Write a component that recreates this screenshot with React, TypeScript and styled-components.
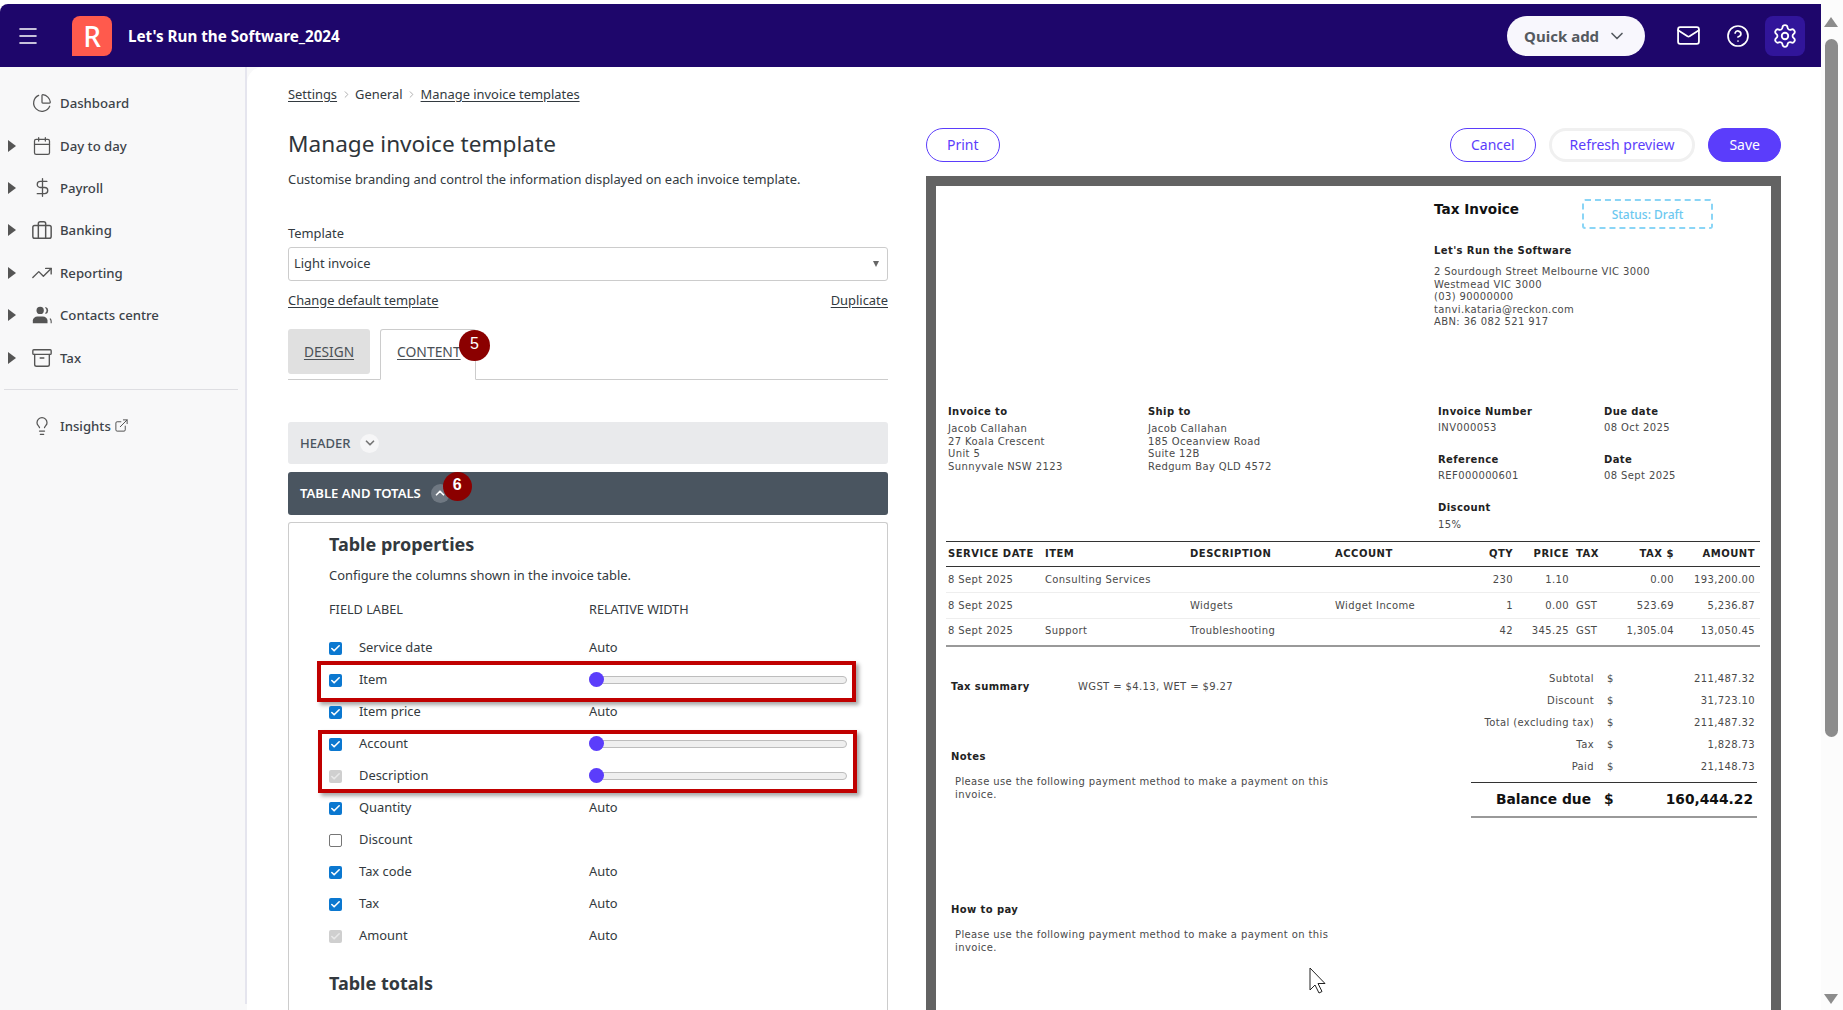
import React from "react";
import styled, { createGlobalStyle } from "styled-components";
import {
  Archive,
  Calendar,
  ChartPie,
  Check,
  ChevronDown,
  ChevronRight,
  ChevronUp,
  CircleHelp,
  DollarSign,
  ExternalLink,
  Lightbulb,
  Mail,
  Menu,
  Settings,
  TrendingUp,
} from "lucide-react";

const UI_FONT = `"Noto Sans", "Open Sans", sans-serif`;
const DOC_FONT = `"DejaVu Sans", sans-serif`;

const GlobalStyle = createGlobalStyle`
  html, body {
    margin: 0;
    height: 100%;
    overflow: hidden;
    background: #fff;
  }
  body {
    font-family: ${UI_FONT};
    color: #333a40;
  }
  * { box-sizing: border-box; }
`;

const BriefcaseIcon = () => (
  <svg width="22" height="22" viewBox="0 0 24 24" fill="none" stroke="currentColor" strokeWidth="1.6">
    <rect x="2" y="7" width="20" height="14" rx="2" />
    <path d="M8 21V5a2 2 0 0 1 2-2h4a2 2 0 0 1 2 2v16" />
  </svg>
);

const UsersIcon = () => (
  <svg width="22" height="22" viewBox="0 0 24 24" fill="currentColor">
    <circle cx="10" cy="7" r="4" />
    <path d="M2 21v-3c0-2.6 2.4-4.5 5-4.5h6c2.6 0 5 1.900 5 4.500v3z" />
    <path d="M16 3.200a4 4 0 0 1 0 7.600l-.6-.9a3.500 3.500 0 0 0 0-5.800z" />
    <path d="M21 15.500c1 .8 1.600 2 1.600 3.500v2h-1.200v-2c0-1-.4-2-1.200-2.600z" />
  </svg>
);

const navItems = [
  { label: "Dashboard", icon: <ChartPie size={20} strokeWidth={1.5} />, caret: false },
  { label: "Day to day", icon: <Calendar size={20} strokeWidth={1.5} />, caret: true },
  { label: "Payroll", icon: <DollarSign size={21} strokeWidth={1.5} />, caret: true },
  { label: "Banking", icon: <BriefcaseIcon />, caret: true },
  { label: "Reporting", icon: <TrendingUp size={22} strokeWidth={1.5} />, caret: true },
  { label: "Contacts centre", icon: <UsersIcon />, caret: true },
  { label: "Tax", icon: <Archive size={22} strokeWidth={1.5} />, caret: true },
];

const tableFields = [
  { label: "Service date", state: "on", width: "Auto" },
  { label: "Item", state: "on", width: "slider", group: 1 },
  { label: "Item price", state: "on", width: "Auto" },
  { label: "Account", state: "on", width: "slider", group: 2 },
  { label: "Description", state: "locked", width: "slider", group: 2 },
  { label: "Quantity", state: "on", width: "Auto" },
  { label: "Discount", state: "off", width: "" },
  { label: "Tax code", state: "on", width: "Auto" },
  { label: "Tax", state: "on", width: "Auto" },
  { label: "Amount", state: "locked", width: "Auto" },
];

const invoiceLines = [
  ["8 Sept 2025", "Consulting Services", "", "", "230", "1.10", "", "0.00", "193,200.00"],
  ["8 Sept 2025", "", "Widgets", "Widget Income", "1", "0.00", "GST", "523.69", "5,236.87"],
  ["8 Sept 2025", "Support", "Troubleshooting", "", "42", "345.25", "GST", "1,305.04", "13,050.45"],
];

const invoiceHead = ["SERVICE DATE", "ITEM", "DESCRIPTION", "ACCOUNT", "QTY", "PRICE", "TAX", "TAX $", "AMOUNT"];

const totals = [
  ["Subtotal", "211,487.32"],
  ["Discount", "31,723.10"],
  ["Total (excluding tax)", "211,487.32"],
  ["Tax", "1,828.73"],
  ["Paid", "21,148.73"],
];

const Shell = styled.div`
  display: flex;
  width: 1843px;
  height: 1010px;
  overflow: hidden;
`;

const Page = styled.div`
  width: 1821px;
  display: flex;
  flex-direction: column;
  padding-top: 4px;
  position: relative;
`;

const TopBar = styled.header`
  height: 63px;
  flex: none;
  background: #1e066b;
  border-radius: 8px 0 0 0;
  display: flex;
  align-items: center;
  padding: 0 16px 0 16px;
  color: #fff;
`;

const MenuButton = styled.div`
  width: 24px;
  height: 24px;
  display: flex;
  align-items: center;
  justify-content: center;
  margin-right: 32px;
`;

const Logo = styled.div`
  width: 40px;
  height: 40px;
  background: #ff5a4d;
  border-radius: 8px 8px 8px 0;
  display: flex;
  align-items: center;
  justify-content: center;
  font-size: 28px;
  font-weight: 500;
  margin-right: 16px;
`;

const OrgName = styled.div`
  font-size: 15.2px;
  font-weight: 700;
  flex: 1;
`;

const QuickAdd = styled.div`
  width: 138px;
  height: 40px;
  border-radius: 20px;
  background: #f8f7fd;
  color: #555a60;
  font-size: 15px;
  font-weight: 700;
  display: flex;
  align-items: center;
  justify-content: center;
  gap: 8px;
  margin-right: 28px;
`;

const TopIcon = styled.div<{ $active?: boolean; $gap?: number }>`
  width: 40px;
  height: 40px;
  border-radius: 8px;
  background: ${(p) => (p.$active ? "#31159a" : "transparent")};
  display: flex;
  align-items: center;
  justify-content: center;
  margin-right: ${(p) => p.$gap ?? 0}px;
`;

const TopIcons = styled.div`
  display: flex;
  gap: 7px;
  margin-left: -4px;
`;

const Body = styled.div`
  flex: 1;
  display: flex;
  min-height: 0;
  background: #f8f8f9;
`;

const Sidebar = styled.nav`
  width: 247px;
  flex: none;
  border-right: 2px solid #e5e5ee;
  padding-top: 15px;
  margin-bottom: 6px;
`;

const NavItem = styled.div`
  height: 42.4px;
  display: flex;
  align-items: center;
  padding-left: 8px;
  font-size: 13.2px;
  font-weight: 500;
  color: #3d4349;
`;

const Caret = styled.span<{ $show: boolean }>`
  width: 0;
  height: 0;
  border-style: solid;
  border-width: 6px 0 6px 8px;
  border-color: transparent transparent transparent ${(p) => (p.$show ? "#555" : "transparent")};
  margin-right: 14px;
`;

const NavIcon = styled.span`
  width: 24px;
  height: 24px;
  display: flex;
  align-items: center;
  justify-content: center;
  margin-right: 6px;
  color: #555;
`;

const NavDivider = styled.hr`
  border: 0;
  border-top: 1px solid #dedee2;
  margin: 10px 7px 15px 4px;
`;

const Main = styled.main`
  flex: 1;
  background: #fff;
  border-radius: 16px 0 0 0;
  display: grid;
  grid-template-columns: 600px 855px;
  column-gap: 38px;
  padding-left: 41px;
  overflow: hidden;
`;

const Left = styled.section`
  display: flex;
  flex-direction: column;
  padding-top: 17px;
  font-size: 12.9px;
`;

const Crumbs = styled.div`
  display: flex;
  align-items: center;
  gap: 3.500px;
  line-height: 20px;
  color: #777;
`;

const Crumb = styled.span<{ $link?: boolean }>`
  color: #333a40;
  text-decoration: ${(p) => (p.$link ? "underline" : "none")};
  text-underline-offset: 2px;
`;

const Title = styled.h1`
  margin: 23px 0 0;
  font-size: 22.6px;
  font-weight: 400;
  line-height: 34px;
  color: #2f353a;
`;

const Lead = styled.p`
  margin: 8px 0 0;
  line-height: 20px;
`;

const FieldLabel = styled.label`
  margin-top: 34px;
  line-height: 20px;
`;

const SelectBox = styled.div`
  margin-top: 4px;
  height: 34px;
  border: 1px solid #ccc;
  border-radius: 3px;
  padding: 0 8px 2px 5px;
  display: flex;
  align-items: center;
  justify-content: space-between;
`;

const SelectArrow = styled.span`
  width: 0;
  height: 0;
  border-style: solid;
  border-width: 6px 3.5px 0 3.5px;
  border-color: #666 transparent transparent transparent;
  margin-top: 2px;
`;

const LinkRow = styled.div`
  margin-top: 9px;
  line-height: 20px;
  display: flex;
  justify-content: space-between;
  text-decoration: underline;
  text-underline-offset: 2px;
`;

const Tabs = styled.div`
  margin-top: 19px;
  height: 51px;
  border-bottom: 1px solid #ccc;
  display: flex;
  align-items: flex-start;
  gap: 10px;
`;

const Tab = styled.div`
  height: 45px;
  width: 82px;
  background: #e0e0e0;
  border-radius: 3px;
  display: flex;
  align-items: center;
  justify-content: center;
  text-decoration: underline;
  text-underline-offset: 2px;
  font-size: 13.7px;
  color: #4a5055;
`;

const ActiveTab = styled.div`
  position: relative;
  height: 51px;
  width: 96px;
  background: #fff;
  border: 1px solid #ccc;
  border-bottom: 1px solid #fff;
  border-radius: 3px 3px 0 0;
  padding: 12px 0 0 16px;
  text-decoration: underline;
  text-underline-offset: 2px;
  font-size: 13.9px;
  color: #4a5055;
`;

const StepBadge = styled.span<{ $top: number; $left: number; $size: number }>`
  position: absolute;
  top: ${(p) => p.$top}px;
  left: ${(p) => p.$left}px;
  width: ${(p) => p.$size}px;
  height: ${(p) => p.$size}px;
  border-radius: 50%;
  background: #8b0000;
  color: #fff;
  font-family: "Liberation Sans", sans-serif;
  font-size: 16px;
  display: flex;
  align-items: center;
  justify-content: center;
  padding-bottom: 3px;
  z-index: 3;
`;

const Accordion = styled.div<{ $open?: boolean }>`
  height: ${(p) => (p.$open ? "43px" : "42px")};
  margin-top: ${(p) => (p.$open ? "8px" : "42px")};
  background: ${(p) => (p.$open ? "#4a5560" : "#e9eaec")};
  color: ${(p) => (p.$open ? "#fff" : "#4a5560")};
  border-radius: 3px;
  padding: ${(p) => (p.$open ? "0 0 1px 12px" : "0 0 0 12px")};
  display: flex;
  align-items: center;
  gap: 10px;
  font-size: ${(p) => (p.$open ? "13.1px" : "13px")};
  font-weight: ${(p) => (p.$open ? 600 : 500)};
`;

const AccordionChevron = styled.span<{ $open?: boolean }>`
  position: relative;
  width: 19px;
  height: 19px;
  border-radius: 50%;
  background: ${(p) => (p.$open ? "#6f7882" : "#f6f6f7")};
  color: ${(p) => (p.$open ? "#fff" : "#777")};
  display: flex;
  align-items: center;
  justify-content: center;
`;

const Panel = styled.div`
  margin-top: 7px;
  flex: 1;
  border: 1px solid #ccc;
  border-bottom: 0;
  border-radius: 3px 3px 0 0;
  padding: 9px 0 0 40px;
`;

const PanelTitle = styled.h2`
  margin: 0;
  font-size: 18px;
  font-weight: 700;
  line-height: 24px;
  color: #33393e;
`;

const PanelText = styled.p`
  margin: 9px 0 0;
  line-height: 20px;
`;

const FieldHead = styled.div`
  margin: 14px 0 13px;
  line-height: 20px;
  display: grid;
  grid-template-columns: 260px 258px;
  font-size: 12.7px;
`;

const FieldGroup = styled.div`
  position: relative;
  width: 518px;
`;

const Highlight = styled.div<{ $top: number; $bottom: number; $left: number; $right: number }>`
  position: absolute;
  top: ${(p) => p.$top}px;
  bottom: ${(p) => p.$bottom}px;
  left: ${(p) => p.$left}px;
  right: ${(p) => p.$right}px;
  border: 4px solid #c00000;
  box-shadow: 3px 3px 4px rgba(0, 0, 0, 0.35);
  pointer-events: none;
`;

const FieldRow = styled.div`
  height: 32px;
  display: grid;
  grid-template-columns: 30px 230px 258px;
  align-items: center;
`;

const FieldText = styled.span`
  margin-top: -2px;
`;

const Tick = styled.span<{ $state: string }>`
  width: 13px;
  height: 13px;
  border-radius: 2px;
  display: flex;
  align-items: center;
  justify-content: center;
  background: ${(p) => (p.$state === "on" ? "#0b78d0" : p.$state === "locked" ? "#cfcfcf" : "#fff")};
  border: ${(p) => (p.$state === "off" ? "1px solid #767676" : "0")};
  color: ${(p) => (p.$state === "on" ? "#fff" : "#e8e8e8")};
`;

const SliderTrack = styled.div`
  height: 8px;
  border: 1px solid #bdbdbd;
  border-radius: 4px;
  background: #efefef;
  position: relative;
`;

const SliderThumb = styled.span`
  position: absolute;
  left: -1px;
  top: -5px;
  width: 15px;
  height: 15px;
  border-radius: 50%;
  background: #5b3dfb;
`;

const SubTitle = styled(PanelTitle)`
  margin-top: 18px;
  line-height: 26px;
`;

const Right = styled.section`
  padding-top: 61px;
  display: flex;
  flex-direction: column;
  min-height: 0;
`;

const Actions = styled.div`
  display: flex;
  gap: 13px;
  margin-bottom: 14px;
`;

const Spacer = styled.div`
  flex: 1;
`;

const PillButton = styled.button<{ $kind?: "outline" | "soft" | "solid" }>`
  height: 34px;
  border-radius: 17px;
  font-family: ${UI_FONT};
  font-size: 14px;
  padding: ${(p) => (p.$kind === "soft" ? "0 18px 1px" : "0 20px 1px")};
  color: ${(p) => (p.$kind === "solid" ? "#fff" : "#5b3dfb")};
  background: ${(p) => (p.$kind === "solid" ? "#5b3dfb" : "#fff")};
  border: ${(p) =>
    p.$kind === "soft" ? "3px solid #f0f0f0" : "1px solid #5b3dfb"};
`;

const PreviewFrame = styled.div`
  flex: 1;
  border: 10px solid #636363;
  border-bottom: 0;
  background: #fff;
  font-family: ${DOC_FONT};
  font-size: 10px;
  color: #4a4a4a;
  overflow: hidden;
`;

const DocTop = styled.div`
  height: 218px;
  padding: 13px 0 0 498px;
`;

const DocTitleRow = styled.div`
  display: flex;
  align-items: flex-start;
`;

const DocTitle = styled.div`
  width: 148px;
  font-size: 13.6px;
  font-weight: 700;
  line-height: 20px;
  color: #111;
`;

const StatusBox = styled.div`
  width: 131px;
  height: 30px;
  border: 2px dashed #8ad5f6;
  border-radius: 3px;
  color: #6cc8f0;
  font-family: ${UI_FONT};
  font-size: 12px;
  font-weight: 500;
  display: flex;
  align-items: center;
  justify-content: center;
`;

const DocStrong = styled.div<{ $spaced?: boolean }>`
  font-weight: 700;
  line-height: 14px;
  color: #222;
  letter-spacing: 0.4px;
  margin-top: ${(p) => (p.$spaced ? "15px" : "0")};
`;

const DocLines = styled.div<{ $top?: number; $inset?: number }>`
  margin-top: ${(p) => p.$top ?? 8}px;
  padding-left: ${(p) => p.$inset ?? 0}px;
  line-height: 12.5px;
  letter-spacing: 0.38px;
  white-space: pre-line;
`;

const DocMeta = styled.div`
  height: 137px;
  padding: 1px 0 0 12px;
  display: grid;
  grid-template-columns: 200px 290px 166px 1fr;
`;

const MetaField = styled.div`
  margin-bottom: 18.5px;
`;

const DocName = styled.div`
  margin-top: 1.5px;
  line-height: 15px;
  letter-spacing: 0.38px;
`;

const DocTable = styled.div`
  margin-left: 10px;
  width: 814px;
  border-top: 1px solid #333;
  border-bottom: 2px solid #999;
`;

const DocRow = styled.div<{ $head?: boolean; $last?: boolean }>`
  height: ${(p) => (p.$head ? "25px" : "26px")};
  padding: ${(p) => (p.$head ? "0 5px 2px 2px" : p.$last ? "0 5px 4px 2px" : "0 5px 0 2px")};
  display: grid;
  grid-template-columns: 97px 145px 145px 115px 63px 56px 51px 54px 81px;
  align-items: center;
  border-bottom: ${(p) => (p.$last ? "0" : p.$head ? "1px solid #333" : "1px solid #eee")};
  font-weight: ${(p) => (p.$head ? 700 : 400)};
  color: ${(p) => (p.$head ? "#222" : "#4a4a4a")};
  letter-spacing: ${(p) => (p.$head ? "0.5px" : "0.38px")};
`;

const DocCell = styled.span<{ $align: string; $pad?: boolean }>`
  text-align: ${(p) => p.$align};
  padding-left: ${(p) => (p.$pad ? "7px" : "0")};
  white-space: nowrap;
`;

const DocBottom = styled.div`
  display: grid;
  grid-template-columns: 535px 286px;
`;

const DocNotes = styled.div`
  padding: 33px 0 0 15px;
`;

const TaxSummary = styled.div`
  display: grid;
  grid-template-columns: 127px 1fr;
  line-height: 14px;
  letter-spacing: 0.38px;
`;

const NoteHead = styled(DocStrong)<{ $gap: number }>`
  margin-top: ${(p) => p.$gap}px;
`;

const NoteText = styled.div`
  margin-top: 10.5px;
  padding-left: 4px;
  width: 395px;
  line-height: 13px;
  letter-spacing: 0.38px;
`;

const DocTotals = styled.div`
  padding-top: 20px;
`;

const TotalRow = styled.div`
  height: 22px;
  display: grid;
  grid-template-columns: 123px 13px 148px;
  align-items: center;
  letter-spacing: 0.38px;
`;

const TotalLabel = styled.span`
  text-align: right;
  white-space: nowrap;
`;

const TotalSign = styled.span`
  grid-column: 2 / 3;
  padding-left: 13px;
  white-space: nowrap;
`;

const TotalValue = styled.span`
  text-align: right;
`;

const BalanceRow = styled.div`
  margin-top: 5px;
  height: 36px;
  padding-bottom: 2px;
  border-top: 1px solid #333;
  border-bottom: 2px solid #999;
  display: grid;
  grid-template-columns: 120px 14px 148px;
  align-items: center;
  font-size: 13.8px;
  font-weight: 700;
  color: #111;
`;

const Scrollbar = styled.aside`
  width: 22px;
  background: #fcfcfc;
  display: flex;
  flex-direction: column;
  align-items: center;
  padding: 17px 2px 6px 0;
`;

const ScrollArrow = styled.span<{ $down?: boolean }>`
  width: 0;
  height: 0;
  border-style: solid;
  border-width: ${(p) => (p.$down ? "10px 7px 0 7px" : "0 7px 10px 7px")};
  border-color: ${(p) =>
    p.$down ? "#8c8c8c transparent transparent transparent" : "transparent transparent #8c8c8c transparent"};
`;

const ScrollThumb = styled.div`
  width: 13px;
  height: 698px;
  margin-top: 12px;
  border-radius: 7px;
  background: #8c8c8c;
`;

const Pointer = styled.svg`
  position: absolute;
  left: 1309px;
  top: 967px;
`;

const Grow = styled.div`
  flex: 1;
`;

export default function App() {
  return (
    <>
      <GlobalStyle />
      <Shell>
        <Page>
          <TopBar>
            <MenuButton>
              <Menu size={26} strokeWidth={1.6} />
            </MenuButton>
            <Logo>R</Logo>
            <OrgName>Let's Run the Software_2024</OrgName>
            <QuickAdd>
              Quick add <ChevronDown size={20} strokeWidth={2} />
            </QuickAdd>
            <TopIcons>
              <TopIcon $gap={2.4}>
                <Mail size={25} strokeWidth={1.7} />
              </TopIcon>
              <TopIcon>
                <CircleHelp size={24} strokeWidth={1.7} />
              </TopIcon>
              <TopIcon $active>
                <Settings size={26} strokeWidth={1.7} />
              </TopIcon>
            </TopIcons>
          </TopBar>
          <Body>
            <Sidebar>
              {navItems.map((item) => (
                <NavItem key={item.label}>
                  <Caret $show={item.caret} />
                  <NavIcon>{item.icon}</NavIcon>
                  {item.label}
                </NavItem>
              ))}
              <NavDivider />
              <NavItem>
                <Caret $show={false} />
                <NavIcon>
                  <Lightbulb size={20} strokeWidth={1.5} />
                </NavIcon>
                Insights&nbsp;
                <ExternalLink size={15} strokeWidth={1.6} color="#555" />
              </NavItem>
            </Sidebar>
            <Main>
              <Left>
                <Crumbs>
                  <Crumb $link>Settings</Crumb>
                  <ChevronRight size={11} color="#aaa" />
                  <Crumb>General</Crumb>
                  <ChevronRight size={11} color="#aaa" />
                  <Crumb $link>Manage invoice templates</Crumb>
                </Crumbs>
                <Title>Manage invoice template</Title>
                <Lead>Customise branding and control the information displayed on each invoice template.</Lead>
                <FieldLabel>Template</FieldLabel>
                <SelectBox>
                  Light invoice
                  <SelectArrow />
                </SelectBox>
                <LinkRow>
                  <span>Change default template</span>
                  <span>Duplicate</span>
                </LinkRow>
                <Tabs>
                  <Tab>DESIGN</Tab>
                  <ActiveTab>
                    CONTENT
                    <StepBadge $top={0} $left={78} $size={31}>5</StepBadge>
                  </ActiveTab>
                </Tabs>
                <Accordion>
                  HEADER
                  <AccordionChevron>
                    <ChevronDown size={14} strokeWidth={3} />
                  </AccordionChevron>
                </Accordion>
                <Accordion $open>
                  TABLE AND TOTALS
                  <AccordionChevron $open>
                    <ChevronUp size={14} strokeWidth={3} />
                    <StepBadge $top={-12} $left={12} $size={29}>6</StepBadge>
                  </AccordionChevron>
                </Accordion>
                <Panel>
                  <PanelTitle>Table properties</PanelTitle>
                  <PanelText>Configure the columns shown in the invoice table.</PanelText>
                  <FieldHead>
                    <span>FIELD LABEL</span>
                    <span>RELATIVE WIDTH</span>
                  </FieldHead>
                  {[
                    tableFields.slice(0, 1),
                    tableFields.slice(1, 2),
                    tableFields.slice(2, 3),
                    tableFields.slice(3, 5),
                    tableFields.slice(5),
                  ].map((rows, i) => (
                    <FieldGroup key={i}>
                      {rows.map((f) => (
                        <FieldRow key={f.label}>
                          <Tick $state={f.state}>
                            {f.state !== "off" && <Check size={11} strokeWidth={3.5} />}
                          </Tick>
                          <FieldText>{f.label}</FieldText>
                          {f.width === "slider" ? (
                            <SliderTrack>
                              <SliderThumb />
                            </SliderTrack>
                          ) : (
                            <FieldText>{f.width}</FieldText>
                          )}
                        </FieldRow>
                      ))}
                      {i === 1 && <Highlight $top={-3} $bottom={-6} $left={-12} $right={-9} />}
                      {i === 3 && <Highlight $top={2} $bottom={-1} $left={-11} $right={-10} />}
                    </FieldGroup>
                  ))}
                  <SubTitle>Table totals</SubTitle>
                </Panel>
              </Left>
              <Right>
                <Actions>
                  <PillButton>Print</PillButton>
                  <Spacer />
                  <PillButton>Cancel</PillButton>
                  <PillButton $kind="soft">Refresh preview</PillButton>
                  <PillButton $kind="solid">Save</PillButton>
                </Actions>
                <PreviewFrame>
                  <DocTop>
                    <DocTitleRow>
                      <DocTitle>Tax Invoice</DocTitle>
                      <StatusBox>Status: Draft</StatusBox>
                    </DocTitleRow>
                    <DocStrong $spaced>Let's Run the Software</DocStrong>
                    <DocLines>
                      {"2 Sourdough Street Melbourne VIC 3000\nWestmead VIC 3000\n(03) 90000000\ntanvi.kataria@reckon.com\nABN: 36 082 521 917"}
                    </DocLines>
                  </DocTop>
                  <DocMeta>
                    <div>
                      <DocStrong>Invoice to</DocStrong>
                      <DocName>Jacob Callahan</DocName>
                      <DocLines $top={0}>{"27 Koala Crescent\nUnit 5\nSunnyvale NSW 2123"}</DocLines>
                    </div>
                    <div>
                      <DocStrong>Ship to</DocStrong>
                      <DocName>Jacob Callahan</DocName>
                      <DocLines $top={0}>{"185 Oceanview Road\nSuite 12B\nRedgum Bay QLD 4572"}</DocLines>
                    </div>
                    <div>
                      <MetaField>
                        <DocStrong>Invoice Number</DocStrong>
                        <DocLines $top={2.75}>INV000053</DocLines>
                      </MetaField>
                      <MetaField>
                        <DocStrong>Reference</DocStrong>
                        <DocLines $top={2.75}>REF000000601</DocLines>
                      </MetaField>
                      <MetaField>
                        <DocStrong>Discount</DocStrong>
                        <DocLines $top={4}>15%</DocLines>
                      </MetaField>
                    </div>
                    <div>
                      <MetaField>
                        <DocStrong>Due date</DocStrong>
                        <DocLines $top={2.75}>08 Oct 2025</DocLines>
                      </MetaField>
                      <MetaField>
                        <DocStrong>Date</DocStrong>
                        <DocLines $top={2.75}>08 Sept 2025</DocLines>
                      </MetaField>
                    </div>
                  </DocMeta>
                  <DocTable>
                    <DocRow $head>
                      {invoiceHead.map((h, c) => (
                        <DocCell key={h} $align={c >= 4 && c !== 6 ? "right" : "left"} $pad={c === 6}>
                          {h}
                        </DocCell>
                      ))}
                    </DocRow>
                    {invoiceLines.map((line, r) => (
                      <DocRow key={r} $last={r === invoiceLines.length - 1}>
                        {line.map((v, c) => (
                          <DocCell key={c} $align={c >= 4 && c !== 6 ? "right" : "left"} $pad={c === 6}>
                            {v}
                          </DocCell>
                        ))}
                      </DocRow>
                    ))}
                  </DocTable>
                  <DocBottom>
                    <DocNotes>
                      <TaxSummary>
                        <DocStrong>Tax summary</DocStrong>
                        <span>WGST = $4.13, WET = $9.27</span>
                      </TaxSummary>
                      <NoteHead $gap={56}>Notes</NoteHead>
                      <NoteText>Please use the following payment method to make a payment on this invoice.</NoteText>
                      <NoteHead $gap={102.5}>How to pay</NoteHead>
                      <NoteText>Please use the following payment method to make a payment on this invoice.</NoteText>
                    </DocNotes>
                    <DocTotals>
                      {totals.map(([label, value]) => (
                        <TotalRow key={label}>
                          <TotalLabel>{label}</TotalLabel>
                          <TotalSign>$</TotalSign>
                          <TotalValue>{value}</TotalValue>
                        </TotalRow>
                      ))}
                      <BalanceRow>
                        <TotalLabel>Balance due</TotalLabel>
                        <TotalSign>$</TotalSign>
                        <TotalValue>160,444.22</TotalValue>
                      </BalanceRow>
                    </DocTotals>
                  </DocBottom>
                </PreviewFrame>
              </Right>
            </Main>
          </Body>
          <Pointer width="20" height="28" viewBox="0 0 20 28" fill="#fff" stroke="#222" strokeWidth="1">
            <path d="M1 1v22l5-5 4 8 3-1.500-4-8h7z" />
          </Pointer>
        </Page>
        <Scrollbar>
          <ScrollArrow />
          <ScrollThumb />
          <Grow />
          <ScrollArrow $down />
        </Scrollbar>
      </Shell>
    </>
  );
}
